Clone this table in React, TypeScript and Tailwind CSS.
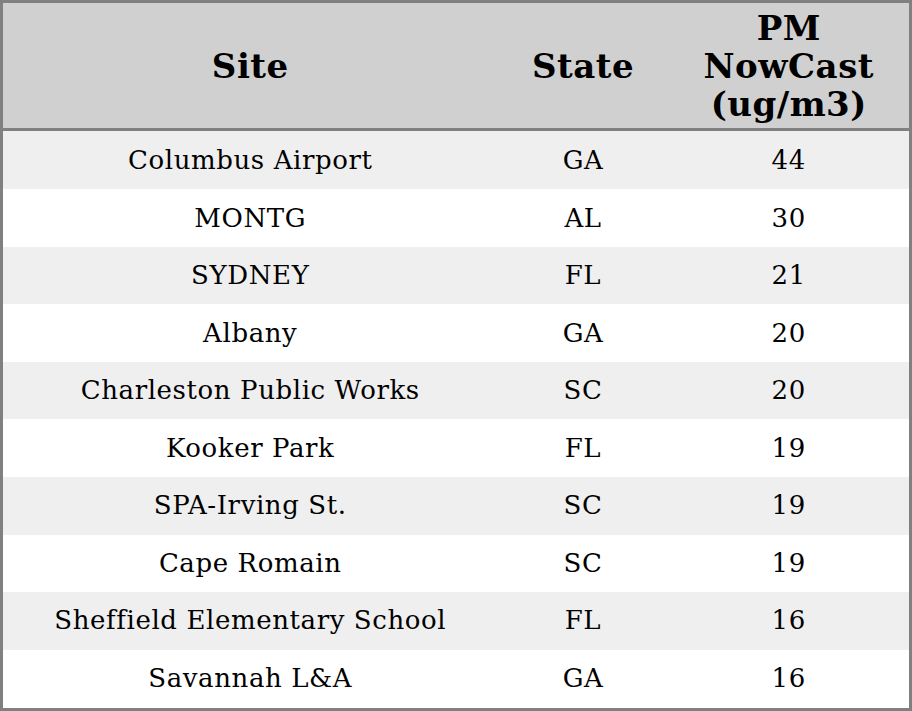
const rows = [
  { site: "Columbus Airport", state: "GA", pm: 44 },
  { site: "MONTG", state: "AL", pm: 30 },
  { site: "SYDNEY", state: "FL", pm: 21 },
  { site: "Albany", state: "GA", pm: 20 },
  { site: "Charleston Public Works", state: "SC", pm: 20 },
  { site: "Kooker Park", state: "FL", pm: 19 },
  { site: "SPA-Irving St.", state: "SC", pm: 19 },
  { site: "Cape Romain", state: "SC", pm: 19 },
  { site: "Sheffield Elementary School", state: "FL", pm: 16 },
  { site: "Savannah L&A", state: "GA", pm: 16 },
];

export default function App() {
  return (
    <div className="w-[912px] h-[711px] bg-white font-['DejaVu_Serif',serif] text-black">
      <table className="w-full h-full border-collapse border-[3px] border-[#808080] table-fixed">
        <colgroup>
          <col className="w-[496px]" />
          <col className="w-[171px]" />
          <col />
        </colgroup>
        <thead>
          <tr className="bg-[#d0d0d0] h-[128px] border-b-[3px] border-[#808080]">
            <th className="text-[34px] leading-[38px] tracking-[0.5px] font-bold text-center">Site</th>
            <th className="text-[34px] leading-[38px] tracking-[0.5px] font-bold text-center">State</th>
            <th className="text-[34px] leading-[38px] tracking-[0.5px] font-bold text-center px-6">
              PM NowCast (ug/m3)
            </th>
          </tr>
        </thead>
        <tbody>
          {rows.map((r, i) => (
            <tr key={i} className={i % 2 === 0 ? "bg-[#efefef]" : "bg-white"}>
              <td className="text-center text-[26px] tracking-[0.6px]">{r.site}</td>
              <td className="text-center text-[26px] tracking-[0.6px]">{r.state}</td>
              <td className="text-center text-[26px] tracking-[0.6px]">{r.pm}</td>
            </tr>
          ))}
        </tbody>
      </table>
    </div>
  );
}
